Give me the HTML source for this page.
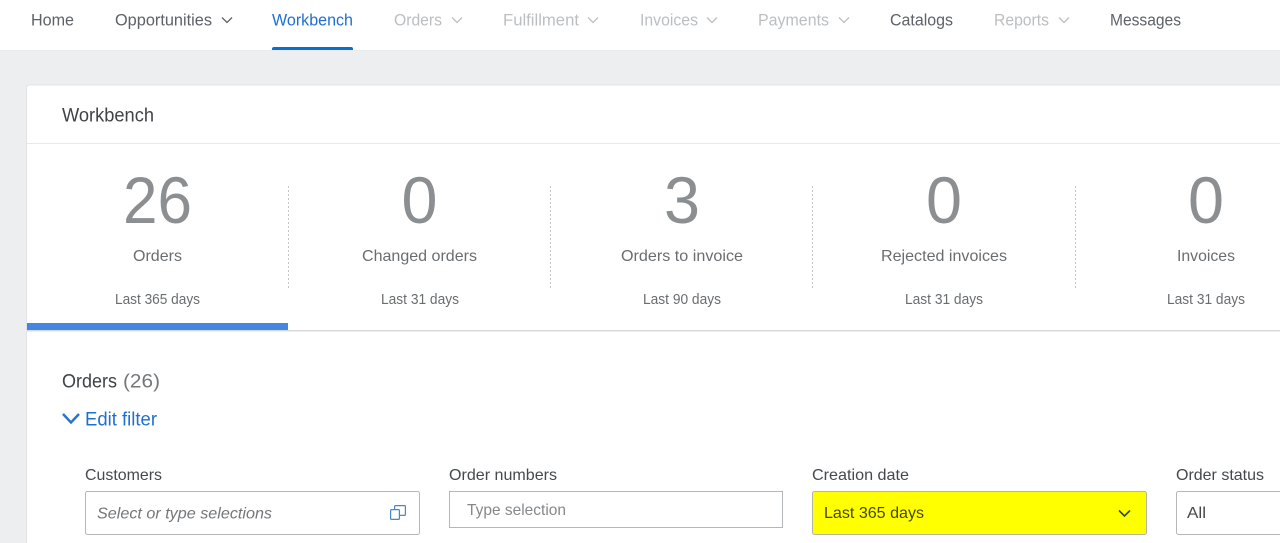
<!DOCTYPE html>
<html lang="en">
<head>
<meta charset="utf-8">
<title>Workbench</title>
<style>
html,body{margin:0;padding:0;width:1280px;height:543px;overflow:hidden;background:#edeef0}
svg{display:block}
text{font-family:"Liberation Sans",Arial,sans-serif}
</style>
</head>
<body>
<svg width="1280" height="543" viewBox="0 0 1280 543" xmlns="http://www.w3.org/2000/svg">
<!-- Nav -->
<rect x="0" y="0" width="1280" height="51" fill="#ffffff"/>
<rect x="0" y="50" width="1280" height="1" fill="#e9eaec"/>
<g font-size="16.5">
<text x="31" y="25.5" textLength="43" lengthAdjust="spacingAndGlyphs" fill="#5c6268">Home</text>
<text x="115" y="25.5" textLength="97" lengthAdjust="spacingAndGlyphs" fill="#5c6268">Opportunities</text>
<text x="272" y="25.5" textLength="81" lengthAdjust="spacingAndGlyphs" fill="#1f6fd2">Workbench</text>
<text x="394" y="25.5" textLength="48" lengthAdjust="spacingAndGlyphs" fill="#bcbfc2">Orders</text>
<text x="503" y="25.5" textLength="76" lengthAdjust="spacingAndGlyphs" fill="#bcbfc2">Fulfillment</text>
<text x="640" y="25.5" textLength="58" lengthAdjust="spacingAndGlyphs" fill="#bcbfc2">Invoices</text>
<text x="758" y="25.5" textLength="71" lengthAdjust="spacingAndGlyphs" fill="#bcbfc2">Payments</text>
<text x="890" y="25.5" textLength="63" lengthAdjust="spacingAndGlyphs" fill="#5c6268">Catalogs</text>
<text x="994" y="25.5" textLength="55" lengthAdjust="spacingAndGlyphs" fill="#bcbfc2">Reports</text>
<text x="1110" y="25.5" textLength="71" lengthAdjust="spacingAndGlyphs" fill="#5c6268">Messages</text>
</g>
<g fill="none" stroke-width="1.3">
<path d="M222 17.5l5 5 5-5" stroke="#5c6268"/>
<path d="M452 17.5l5 5 5-5" stroke="#bcbfc2"/>
<path d="M588 17.5l5 5 5-5" stroke="#bcbfc2"/>
<path d="M707 17.5l5 5 5-5" stroke="#bcbfc2"/>
<path d="M839 17.5l5 5 5-5" stroke="#bcbfc2"/>
<path d="M1059 17.5l5 5 5-5" stroke="#bcbfc2"/>
</g>
<path d="M272 50v-1a2 2 0 0 1 2-2h77a2 2 0 0 1 2 2v1z" fill="#0a6ed1"/>

<!-- Card -->
<path d="M26.5 560V88a3 3 0 0 1 3-3H1290V560z" fill="#ffffff" stroke="#e1e3e5" stroke-width="1"/>
<rect x="27" y="143" width="1253" height="1" fill="#e8e9eb"/>
<text x="62" y="121.5" font-size="19.5" textLength="92" lengthAdjust="spacingAndGlyphs" fill="#3f4347">Workbench</text>

<!-- Tiles -->
<g font-size="66" fill="#8c8f92">
<text x="123" y="223" textLength="69" lengthAdjust="spacingAndGlyphs">26</text>
<text x="401.5" y="223" textLength="36" lengthAdjust="spacingAndGlyphs">0</text>
<text x="664" y="223" textLength="36" lengthAdjust="spacingAndGlyphs">3</text>
<text x="926" y="223" textLength="36" lengthAdjust="spacingAndGlyphs">0</text>
<text x="1188" y="223" textLength="36" lengthAdjust="spacingAndGlyphs">0</text>
</g>
<g font-size="16" fill="#6a6d70">
<text x="133" y="261" textLength="49" lengthAdjust="spacingAndGlyphs">Orders</text>
<text x="362" y="261" textLength="115" lengthAdjust="spacingAndGlyphs">Changed orders</text>
<text x="621" y="261" textLength="122" lengthAdjust="spacingAndGlyphs">Orders to invoice</text>
<text x="881" y="261" textLength="126" lengthAdjust="spacingAndGlyphs">Rejected invoices</text>
<text x="1177" y="261" textLength="58" lengthAdjust="spacingAndGlyphs">Invoices</text>
</g>
<g font-size="14.5" fill="#6a6d70">
<text x="115" y="304" textLength="85" lengthAdjust="spacingAndGlyphs">Last 365 days</text>
<text x="381" y="304" textLength="78" lengthAdjust="spacingAndGlyphs">Last 31 days</text>
<text x="643" y="304" textLength="78" lengthAdjust="spacingAndGlyphs">Last 90 days</text>
<text x="905" y="304" textLength="78" lengthAdjust="spacingAndGlyphs">Last 31 days</text>
<text x="1167" y="304" textLength="78" lengthAdjust="spacingAndGlyphs">Last 31 days</text>
</g>
<g stroke="#c4c6c8" stroke-width="1" stroke-dasharray="2 2">
<path d="M288.5 186V288"/>
<path d="M550.5 186V288"/>
<path d="M812.5 186V288"/>
<path d="M1075.5 186V288"/>
</g>
<rect x="27" y="330" width="1253" height="1.5" fill="#d9dadc"/>
<rect x="27" y="323" width="261" height="7" fill="#4288e2"/>

<!-- Section -->
<text x="62" y="387.5" font-size="19" textLength="55" lengthAdjust="spacingAndGlyphs" fill="#3f4347">Orders</text>
<text x="123" y="387.5" font-size="19" textLength="37" lengthAdjust="spacingAndGlyphs" fill="#74777a">(26)</text>
<path d="M63 414l8 8.5 8-8.5" fill="none" stroke="#2a72cf" stroke-width="2.4"/>
<text x="85" y="425.5" font-size="19" textLength="72" lengthAdjust="spacingAndGlyphs" fill="#1f6fd2">Edit filter</text>

<!-- Filters -->
<g font-size="16" fill="#45494d">
<text x="85" y="480" textLength="77" lengthAdjust="spacingAndGlyphs">Customers</text>
<text x="449" y="480" textLength="108" lengthAdjust="spacingAndGlyphs">Order numbers</text>
<text x="812" y="480" textLength="97" lengthAdjust="spacingAndGlyphs">Creation date</text>
<text x="1176" y="480" textLength="88" lengthAdjust="spacingAndGlyphs">Order status</text>
</g>
<rect x="85.5" y="491.5" width="334" height="43" rx="2" fill="#fff" stroke="#b4b7ba"/>
<text x="97" y="518.5" font-size="16" font-style="italic" textLength="175" lengthAdjust="spacingAndGlyphs" fill="#74777a">Select or type selections</text>
<g fill="none" stroke="#4a86c8" stroke-width="1.2">
<rect x="390.6" y="509.6" width="8.8" height="9.8" rx="1"/>
<path d="M394.6 509.5V506.6a1 1 0 0 1 1-1h8.8a1 1 0 0 1 1 1v7.8a1 1 0 0 1-1 1h-5"/>
</g>
<rect x="449.5" y="491.5" width="333" height="36" fill="#fff" stroke="#b4b7ba"/>
<text x="467" y="515" font-size="16" textLength="99" lengthAdjust="spacingAndGlyphs" fill="#85888b">Type selection</text>
<rect x="812.5" y="491.5" width="334" height="43" rx="2" fill="#ffff00" stroke="#b4b7a0"/>
<text x="824" y="518" font-size="16" textLength="100" lengthAdjust="spacingAndGlyphs" fill="#45480a">Last 365 days</text>
<path d="M1119 510.5l5.5 5.5 5.5-5.5" fill="none" stroke="#2f4a10" stroke-width="1.6"/>
<rect x="1176.5" y="491.5" width="130" height="43" rx="2" fill="#fff" stroke="#b4b7ba"/>
<text x="1187" y="518" font-size="16" textLength="19" lengthAdjust="spacingAndGlyphs" fill="#45494d">All</text>
</svg>
</body>
</html>
